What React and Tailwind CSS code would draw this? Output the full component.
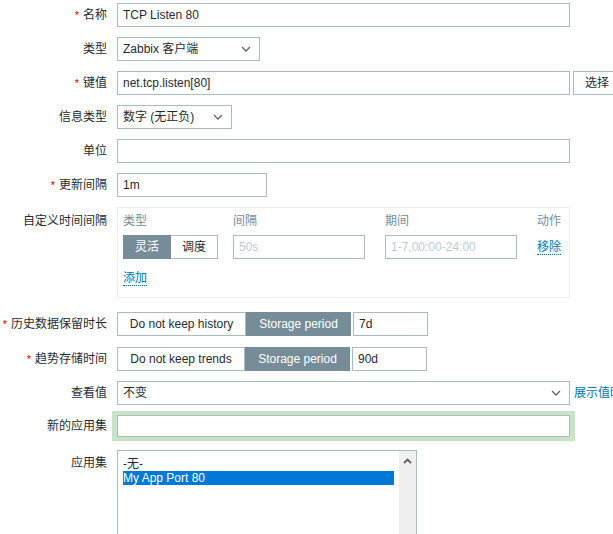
import React from 'react';

const Chevron = ({ className = '' }) => (
  <svg width="10" height="6" viewBox="0 0 10 6" className={className}>
    <path d="M1 1 L5 5 L9 1" fill="none" stroke="#5b6770" strokeWidth="1.3" />
  </svg>
);

const Label = ({ req, children, top }) => (
  <div
    className={`w-[107px] shrink-0 text-right text-[12px] text-[#1f2c33] leading-[24px] ${top ? 'self-start' : ''}`}
  >
    {req && <span className="text-[#d40000] mr-[4px] text-[11px] align-top">*</span>}
    {children}
  </div>
);

const Input = ({ value, w, placeholder }) => (
  <div
    className={`${w} h-[24px] border border-[#acbbc2] bg-white px-[5px] flex items-center text-[12px] ${placeholder ? 'text-[#c2cbd0]' : 'text-[#1f2c33]'}`}
  >
    {value || placeholder}
  </div>
);

const Select = ({ value, w }) => (
  <div
    className={`${w} h-[24px] border border-[#acbbc2] bg-white pl-[5px] pr-[8px] flex items-center justify-between text-[12px] text-[#1f2c33]`}
  >
    <span>{value}</span>
    <Chevron />
  </div>
);

const Link = ({ children }) => (
  <span className="text-[12px] text-[#0275b8] border-b border-dotted border-[#0275b8] leading-[14px]">
    {children}
  </span>
);

const Row = ({ children, className = 'mb-[10px]' }) => (
  <div className={`flex items-center gap-[10px] ${className}`}>{children}</div>
);

export default function App() {
  return (
    <div
      className="w-[613px] h-[534px] overflow-hidden bg-white pt-[3px]"
      style={{ fontFamily: '"Liberation Sans", Arial, "Noto Sans CJK SC", sans-serif' }}
    >
      <Row>
        <Label req>名称</Label>
        <Input w="w-[453px]" value="TCP Listen 80" />
      </Row>
      <Row>
        <Label>类型</Label>
        <Select w="w-[143px]" value="Zabbix 客户端" />
      </Row>
      <Row>
        <Label req>键值</Label>
        <div className="flex gap-[3px] items-center">
          <Input w="w-[453px]" value="net.tcp.listen[80]" />
          <div className="h-[24px] w-[50px] shrink-0 border border-[#acbbc2] bg-white flex items-center pl-[11px] text-[12px] text-[#1f2c33]">
            选择
          </div>
        </div>
      </Row>
      <Row>
        <Label>信息类型</Label>
        <Select w="w-[115px]" value="数字 (无正负)" />
      </Row>
      <Row>
        <Label>单位</Label>
        <Input w="w-[453px]" value="" />
      </Row>
      <Row>
        <Label req>更新间隔</Label>
        <Input w="w-[150px]" value="1m" />
      </Row>
      <div className="flex gap-[10px] mb-[14px]">
        <div className="w-[107px] shrink-0 text-right text-[12px] text-[#1f2c33] pt-[5px]">自定义时间间隔</div>
        <div className="w-[453px] h-[91px] border border-[#ebeef0] px-[5px] pt-[5px]">
          <div className="flex text-[12px] text-[#768d99] h-[22px] leading-[16px]">
            <div className="w-[110px]">类型</div>
            <div className="w-[152px]">间隔</div>
            <div className="w-[152px]">期间</div>
            <div>动作</div>
          </div>
          <div className="flex items-center h-[24px]">
            <div className="w-[110px] flex">
              <div className="w-[48px] h-[24px] bg-[#768d99] text-white text-[12px] flex items-center justify-center border border-[#768d99]">
                灵活
              </div>
              <div className="w-[47px] h-[24px] border border-l-0 border-[#acbbc2] text-[#1f2c33] text-[12px] flex items-center justify-center">
                调度
              </div>
            </div>
            <div className="w-[152px]">
              <Input w="w-[132px]" placeholder="50s" />
            </div>
            <div className="w-[152px]">
              <Input w="w-[132px]" placeholder="1-7,00:00-24:00" />
            </div>
            <Link>移除</Link>
          </div>
          <div className="mt-[6px]">
            <Link>添加</Link>
          </div>
        </div>
      </div>
      <Row className="mb-[11px]">
        <Label req>历史数据保留时长</Label>
        <div className="flex items-center">
          <div className="w-[129px] h-[24px] border border-[#acbbc2] text-[12px] text-[#1f2c33] flex items-center justify-center">
            Do not keep history
          </div>
          <div className="w-[105px] h-[24px] bg-[#768d99] text-[12px] text-white flex items-center justify-center">
            Storage period
          </div>
          <div className="ml-[2px]">
            <Input w="w-[75px]" value="7d" />
          </div>
        </div>
      </Row>
      <Row className="mb-[10px]">
        <Label req>趋势存储时间</Label>
        <div className="flex items-center">
          <div className="w-[128px] h-[24px] border border-[#acbbc2] text-[12px] text-[#1f2c33] flex items-center justify-center">
            Do not keep trends
          </div>
          <div className="w-[105px] h-[24px] bg-[#768d99] text-[12px] text-white flex items-center justify-center">
            Storage period
          </div>
          <div className="ml-[2px]">
            <Input w="w-[75px]" value="90d" />
          </div>
        </div>
      </Row>
      <Row className="mb-[6px]">
        <Label>查看值</Label>
        <div className="flex items-center gap-[4px] shrink-0">
          <Select w="w-[453px]" value="不变" />
          <span className="text-[12px] text-[#0275b8] whitespace-nowrap">展示值映射</span>
        </div>
      </Row>
      <Row className="mb-[9px]">
        <Label>新的应用集</Label>
        <div className="ml-[-5px] bg-[#c8e3c6] px-[5px] py-[4px]">
          <div className="w-[453px] h-[22px] border border-[#acbbc2] bg-white" />
        </div>
      </Row>
      <div className="flex gap-[10px]">
        <div className="w-[107px] shrink-0 text-right text-[12px] text-[#1f2c33] pt-[4px]">应用集</div>
        <div className="w-[300px] h-[100px] border border-[#acbbc2] bg-white flex">
          <div className="flex-1 pl-[5px] pt-[6px] pr-[5px] text-[12px] text-[#1f2c33] leading-[14px]">
            <div>-无-</div>
            <div className="bg-[#0078d7] text-white">My App Port 80</div>
          </div>
          <div className="w-[17px] bg-[#f0f0f0] flex justify-center pt-[7px]">
            <svg width="9" height="6" viewBox="0 0 9 6">
              <path d="M1 5 L4.5 1.5 L8 5" fill="none" stroke="#606060" strokeWidth="1.8" />
            </svg>
          </div>
        </div>
      </div>
    </div>
  );
}
